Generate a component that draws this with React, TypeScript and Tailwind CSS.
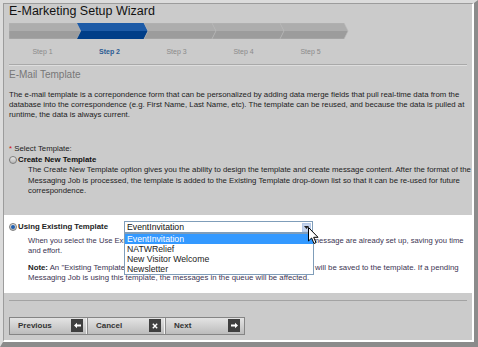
import React from "react";

const font = "font-['Liberation_Sans',Arial,sans-serif]";

const steps = ["Step 1", "Step 2", "Step 3", "Step 4", "Step 5"];

function ProgressBar() {
  // chevron segments, 16px tall, 4px arrow depth
  const seg = (x0: number, x1: number, first: boolean) => {
    const pts = first
      ? `${x0},0 ${x1},0 ${x1 + 4},8 ${x1},16 ${x0},16`
      : `${x0},0 ${x1},0 ${x1 + 4},8 ${x1},16 ${x0},16 ${x0 + 4},8`;
    return pts;
  };
  const bounds = [0, 68, 135, 203, 271, 335];
  return (
    <svg width="345" height="16" viewBox="0 0 345 16" className="block">
      <defs>
        <linearGradient id="g" x1="0" y1="0" x2="0" y2="1">
          <stop offset="0" stopColor="#adadad" />
          <stop offset="0.5" stopColor="#adadad" />
          <stop offset="0.5" stopColor="#9c9c9c" />
          <stop offset="1" stopColor="#9c9c9c" />
        </linearGradient>
        <linearGradient id="b" x1="0" y1="0" x2="0" y2="1">
          <stop offset="0" stopColor="#1d5ba7" />
          <stop offset="0.5" stopColor="#1d5ba7" />
          <stop offset="0.5" stopColor="#003e88" />
          <stop offset="1" stopColor="#003e88" />
        </linearGradient>
      </defs>
      {bounds.slice(0, 5).map((x0, i) => (
        <polygon
          key={i}
          points={seg(x0, bounds[i + 1], i === 0)}
          fill={i === 1 ? "url(#b)" : "url(#g)"}
          stroke={i === 1 ? "none" : "#b9b9b9"}
          strokeWidth="0.6"
        />
      ))}
    </svg>
  );
}

function Radio({ checked }: { checked?: boolean }) {
  return (
    <span className="mr-[1px] inline-flex h-[8px] w-[8px] shrink-0 items-center justify-center rounded-full border border-[#7d7d7d] bg-linear-to-b from-[#e8e8e8] to-[#b5b5b5]">
      {checked && <span className="h-[4px] w-[4px] rounded-full bg-[#1f5fb0]" />}
    </span>
  );
}

function Cursor() {
  return (
    <svg width="12" height="18" viewBox="0 0 12 18" className="absolute left-[305px] top-[224px]">
      <path d="M0.5 0.5 L0.5 14 L3.6 11 L6 16.5 L8 15.6 L5.7 10.3 L10 10.3 Z" fill="#fff" stroke="#000" strokeWidth="1" />
    </svg>
  );
}

function Btn({ label, icon, last }: { label: string; icon: "prev" | "x" | "next"; last?: boolean }) {
  return (
    <div
      className={`flex h-full w-[78px] items-center justify-between bg-linear-to-b from-[#e4e4e4] to-[#bcbcbc] pl-[8px] pr-[4px] ${last ? "" : "border-r border-r-[#8c8c8c] shadow-[inset_-1px_0_0_#f2f2f2]"}`}
    >
      <span className="text-[8px] font-bold text-[#333]">{label}</span>
      <span className="flex h-[13px] w-[12px] items-center justify-center bg-[#3f3f3f]">
        {icon === "prev" && (
          <svg width="7" height="7" viewBox="0 0 7 7"><path d="M0 3.5 L3 0.8 L3 2.6 L7 2.6 L7 4.4 L3 4.4 L3 6.2 Z" fill="#fff" /></svg>
        )}
        {icon === "next" && (
          <svg width="7" height="7" viewBox="0 0 7 7"><path d="M7 3.5 L4 0.8 L4 2.6 L0 2.6 L0 4.4 L4 4.4 L4 6.2 Z" fill="#fff" /></svg>
        )}
        {icon === "x" && (
          <svg width="6" height="6" viewBox="0 0 6 6"><path d="M0.8 0.8 L5.2 5.2 M5.2 0.8 L0.8 5.2" stroke="#fff" strokeWidth="1.4" /></svg>
        )}
      </span>
    </div>
  );
}

export default function App() {
  return (
    <div
      className={`${font} relative flex h-[347px] w-[478px] overflow-hidden border-t-[3px] border-l-[3px] border-r-4 border-b-[5px] border-t-[#dcdcdc] border-l-[#dcdcdc] border-r-[#8b8b8b] border-b-[#8b8b8b] bg-[#cbcbcb]`}
    >
      <div className="flex flex-1 flex-col border-t border-l border-t-[#9c9c9c] border-l-[#9c9c9c] border-r-2 border-b-2 border-r-white border-b-white bg-[#cbcbcb]">
        {/* header */}
        <div className="pl-[5px]">
          <h1 className="text-[12.5px] leading-[14px] text-[#111]">E-Marketing Setup Wizard</h1>
          <div className="mt-[5px]">
            <ProgressBar />
          </div>
          <div className="mt-[8px] flex">
            {steps.map((s, i) => (
              <div
                key={s}
                className={`w-[67px] text-center text-[7px] leading-[10px] ${i === 1 ? "font-bold text-[#2c5b93]" : "text-[#8a8a8a]"}`}
              >
                {s}
              </div>
            ))}
          </div>
        </div>

        <div className="mx-[5px] mt-[7px] border-t border-b border-t-[#a9a9a9] border-b-[#dedede]" />

        {/* body */}
        <div className="pl-[5px]">
          <h2 className="mt-[3px] text-[10px] leading-[12px] text-[#777]">E-Mail Template</h2>
          <p className="mt-[9px] whitespace-nowrap text-[7.8px] leading-[10px] text-[#1c1c1c]">
            The e-mail template is a correpondence form that can be personalized by adding data merge fields that pull real-time data from the
            <br />
            database into the correspondence (e.g. First Name, Last Name, etc). The template can be reused, and because the data is pulled at
            <br />
            runtime, the data is always current.
          </p>

          <div className="mt-[24px] text-[7.8px] leading-[10px] text-[#1c1c1c]">
            <span className="text-[#d01010]">*</span> Select Template:
          </div>
          <div className="mt-[1px] flex items-center text-[7.8px] font-bold leading-[10px] text-[#111]">
            <Radio />
            Create New Template
          </div>
          <p className="whitespace-nowrap pl-[19px] text-[7.8px] leading-[10.5px] text-[#1c1c1c]">
            The Create New Template option gives you the ability to design the template and create message content. After the format of the
            <br />
            Messaging Job is processed, the template is added to the Existing Template drop-down list so that it can be re-used for future
            <br />
            correspondence.
          </p>
        </div>

        {/* existing template */}
        <div className="mt-[18px] bg-white pb-[10px] pl-[5px] pt-[6px]">
          <div className="flex h-[13px] items-center">
            <div className="flex w-[115px] items-center text-[7.8px] font-bold leading-[10px] text-[#222]">
              <Radio checked />
              Using Existing Template
            </div>
            <div className="flex h-[12px] w-[189px] items-center justify-between border border-[#7f9db9] bg-white pl-[2px] pr-[1px]">
              <span className="text-[8.7px] leading-[10px] text-[#111]">EventInvitation</span>
              <span className="flex h-[9px] w-[9px] items-center justify-center border border-[#b4c8e6] bg-[#c3d3ee]">
                <svg width="5" height="3" viewBox="0 0 5 3"><path d="M0 0 L5 0 L2.5 3 Z" fill="#222" /></svg>
              </span>
            </div>
          </div>
          <p className="mt-[2px] whitespace-nowrap pl-[19px] text-[7.6px] leading-[10px] text-[#3b3452]">
            When you select the Use Existing Template option, the format and the content of the message are already set up, saving you time
            <br />
            and effort.
          </p>
          <p className="mt-[7px] whitespace-nowrap pl-[19px] text-[7.8px] leading-[10px] text-[#3b3452]">
            <b className="text-[#222]">Note:</b> An "Existing Template" may be modified at any time, and any changes made will be saved to the template. If a pending
            <br />
            Messaging Job is using this template, the messages in the queue will be affected.
          </p>
        </div>

        <div className="mx-[5px] mt-[7px] border-t border-t-[#a3a3a3]" />

        {/* buttons */}
        <div className="ml-[5px] mt-[16px] flex h-[18px] w-[236px] border border-[#858585]">
          <Btn label="Previous" icon="prev" />
          <Btn label="Cancel" icon="x" />
          <Btn label="Next" icon="next" last />
        </div>
      </div>

      {/* open select list */}
      <div className="absolute left-[121px] top-[230px] w-[190px] border border-[#7f9db9] bg-white text-[8.7px] leading-[10px] text-[#222]">
        <div className="bg-[#3399ff] pl-[2px] text-white">EventInvitation</div>
        <div className="pl-[2px]">NATWRelief</div>
        <div className="pl-[2px]">New Visitor Welcome</div>
        <div className="pl-[2px]">Newsletter</div>
      </div>
      <Cursor />
    </div>
  );
}
